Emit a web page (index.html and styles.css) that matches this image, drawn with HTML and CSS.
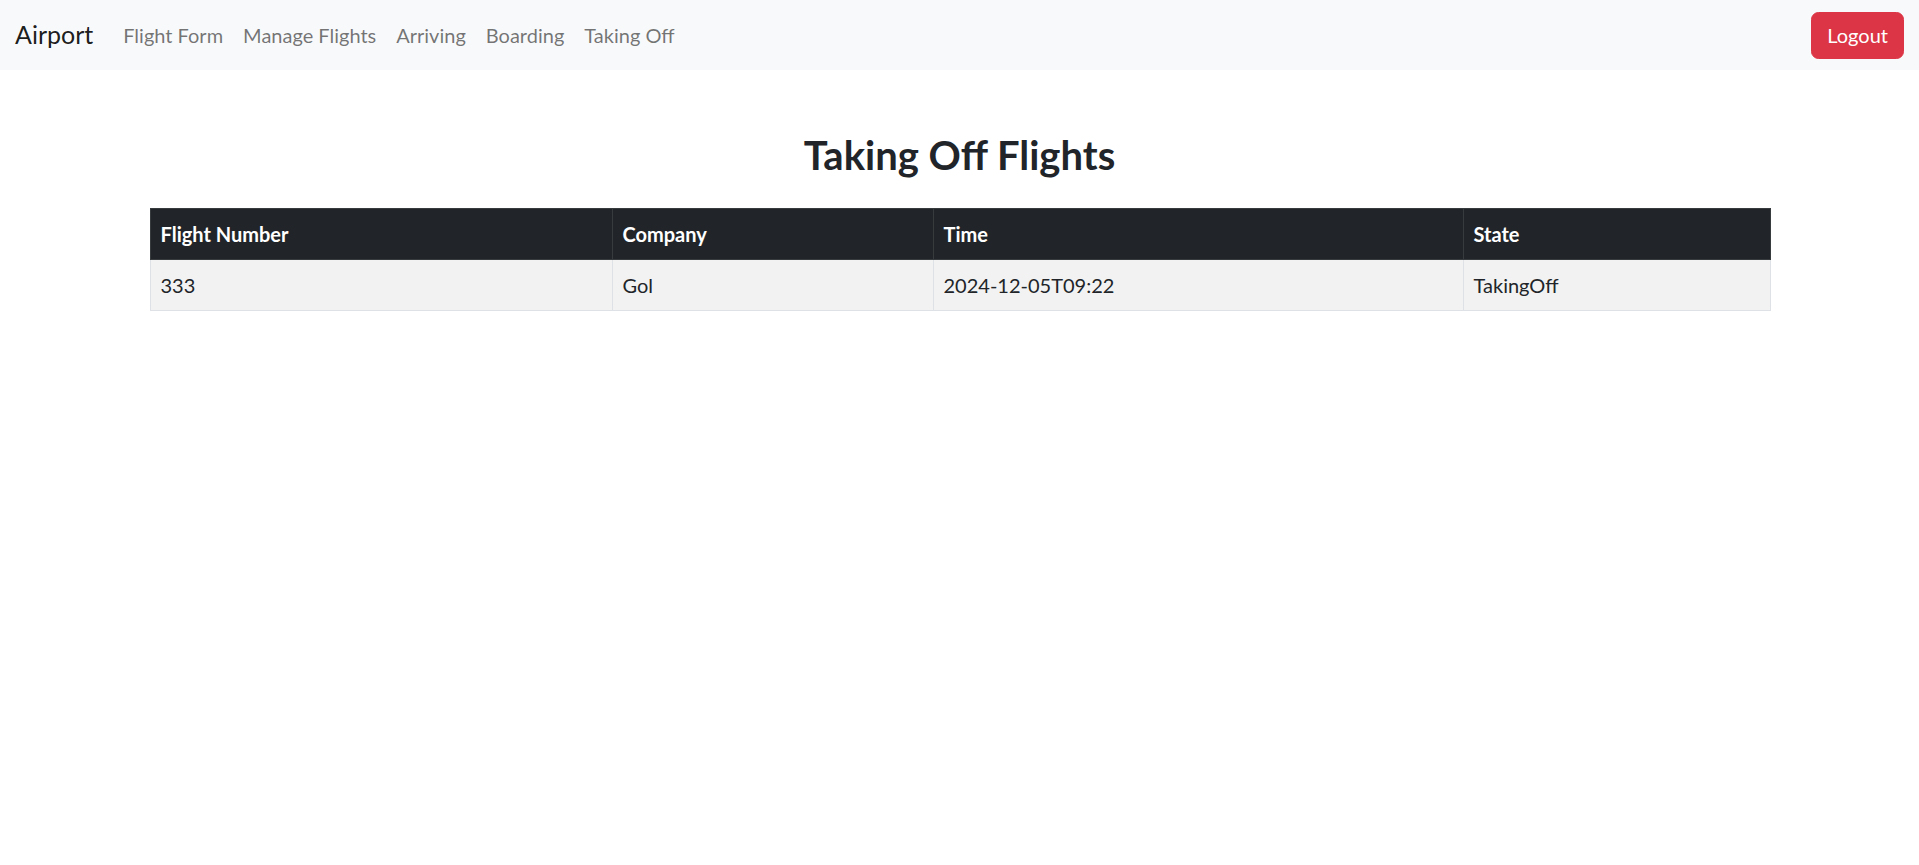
FILE: index.html
```html
<!DOCTYPE html>
<html lang="en">
<head>
<meta charset="utf-8">
<title>Airport</title>
<link rel="stylesheet" href="styles.css">
</head>
<body>
<nav class="navbar">
  <div class="nav-left">
    <a class="brand" href="#">Airport</a>
    <ul class="nav-links">
      <li><a class="nav-link" href="#">Flight Form</a></li>
      <li><a class="nav-link" href="#">Manage Flights</a></li>
      <li><a class="nav-link" href="#">Arriving</a></li>
      <li><a class="nav-link" href="#">Boarding</a></li>
      <li><a class="nav-link" href="#">Taking Off</a></li>
    </ul>
  </div>
  <button class="btn-logout" type="button">Logout</button>
</nav>
<main class="container">
  <h1 class="title">Taking Off Flights</h1>
  <table class="flights">
    <colgroup>
      <col class="c-num">
      <col class="c-company">
      <col class="c-time">
      <col class="c-state">
    </colgroup>
    <thead>
      <tr>
        <th>Flight Number</th>
        <th>Company</th>
        <th>Time</th>
        <th>State</th>
      </tr>
    </thead>
    <tbody>
      <tr>
        <td>333</td>
        <td>Gol</td>
        <td>2024-12-05T09:22</td>
        <td>TakingOff</td>
      </tr>
    </tbody>
  </table>
</main>
</body>
</html>
```
FILE: styles.css
```css
* { box-sizing: border-box; }
html, body {
  margin: 0;
  padding: 0;
}
body {
  font-family: "Lato", "Noto Sans", "Liberation Sans", sans-serif;
  font-size: 20px;
  line-height: 1.5;
  color: #212529;
  background: #fff;
}
.navbar {
  display: flex;
  align-items: center;
  justify-content: space-between;
  height: 70px;
  padding: 10px 15px;
  background: #f8f9fa;
}
.nav-left {
  display: flex;
  align-items: center;
}
.brand {
  font-size: 25px;
  line-height: 1.5;
  color: rgba(0,0,0,0.9);
  text-decoration: none;
  margin-right: 20px;
}
.nav-links {
  display: flex;
  list-style: none;
  margin: 0;
  padding: 0;
}
.nav-link {
  display: block;
  padding: 10px 10px;
  color: rgba(0,0,0,0.55);
  text-decoration: none;
}
.btn-logout {
  font-family: inherit;
  font-size: 20px;
  line-height: 30px;
  color: #fff;
  background: #dc3545;
  border: 1px solid #dc3545;
  border-radius: 7.5px;
  padding: 7.5px 15px;
}
.container {
  width: 1650px;
  max-width: 100%;
  margin: 0 auto;
  padding: 0 15px;
}
.title {
  margin: 61px 0 29px;
  text-align: center;
  font-size: 40px;
  line-height: 1.2;
  font-weight: 700;
  color: #212529;
}
.flights {
  width: 100%;
  table-layout: fixed;
  border-collapse: collapse;
  margin-bottom: 20px;
}
.c-num { width: 462px; }
.c-company { width: 321px; }
.c-time { width: 530px; }
.c-state { width: 307px; }
.flights th, .flights td {
  text-align: left;
  padding: 10px 10px;
  line-height: 30px;
}
.flights th {
  background: #212529;
  color: #fff;
  font-weight: 700;
  border: 1px solid #373b3e;
}
.flights td {
  background: #f2f2f2;
  color: #212529;
  border: 1px solid #dee2e6;
}
```
